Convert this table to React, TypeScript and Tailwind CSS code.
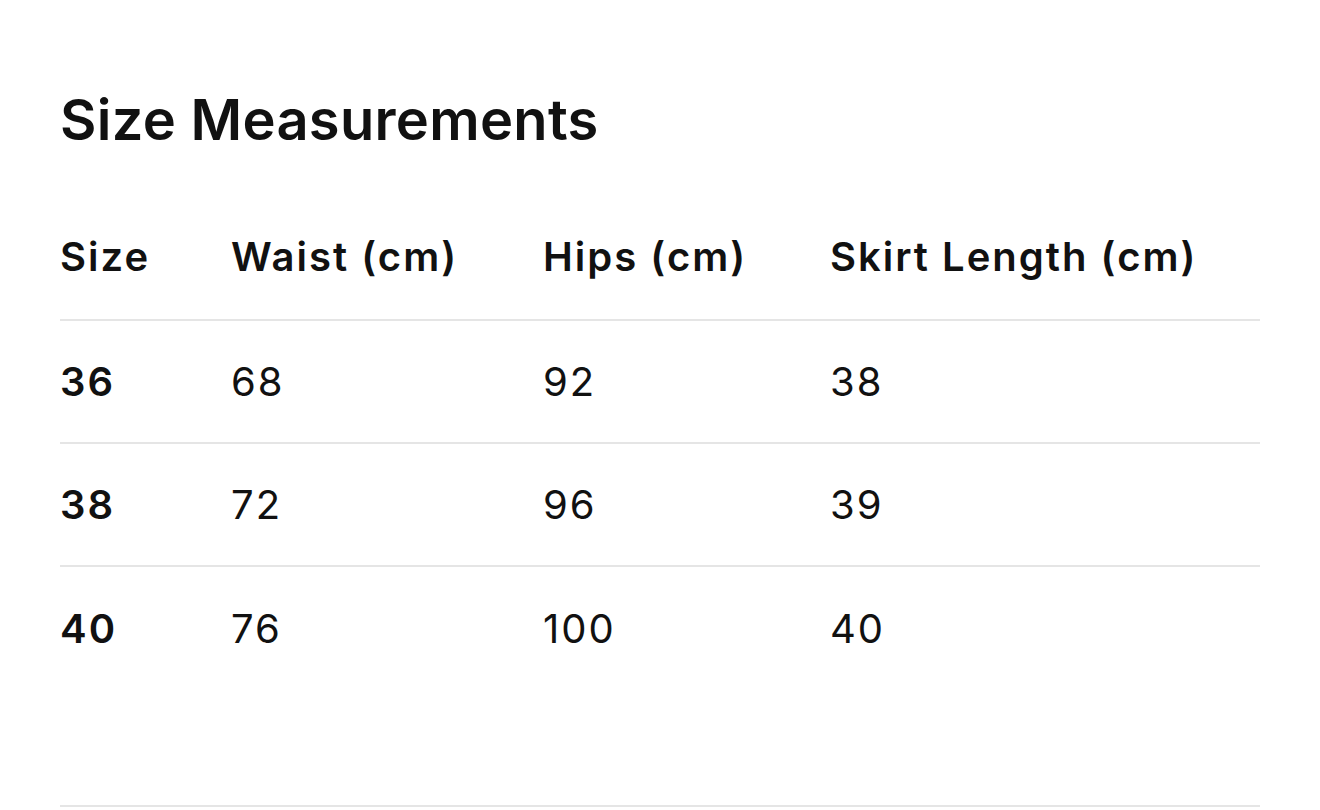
import React from 'react';

const rows = [
  { size: '36', waist: '68', hips: '92', length: '38' },
  { size: '38', waist: '72', hips: '96', length: '39' },
  { size: '40', waist: '76', hips: '100', length: '40' },
];

const cols = 'grid grid-cols-[171px_312px_287px_1fr] items-center';

export default function App() {
  return (
    <div
      className="min-h-[810px] bg-white px-[60px] pt-[86px] text-[#111111]"
      style={{ fontFamily: 'Inter, "Noto Sans", sans-serif' }}
    >
      <h1 className="text-[56px] font-semibold leading-[68px] tracking-[0.3px]">Size Measurements</h1>

      <div className="mt-[40px] text-[40px] leading-[48px] tracking-[2px]">
        <div className={`${cols} h-[127px] border-b-2 border-[#e5e5e5] font-semibold`}>
          <div>Size</div>
          <div>Waist (cm)</div>
          <div>Hips (cm)</div>
          <div>Skirt Length (cm)</div>
        </div>
        {rows.map((r, i) => (
          <div
            key={r.size}
            className={`${cols} h-[123px] ${i < rows.length - 1 ? 'border-b-2 border-[#e5e5e5]' : ''}`}
          >
            <div className="font-semibold">{r.size}</div>
            <div>{r.waist}</div>
            <div>{r.hips}</div>
            <div>{r.length}</div>
          </div>
        ))}
      </div>

      <div className="mt-[115px] border-t-2 border-[#e5e5e5]" />
    </div>
  );
}
